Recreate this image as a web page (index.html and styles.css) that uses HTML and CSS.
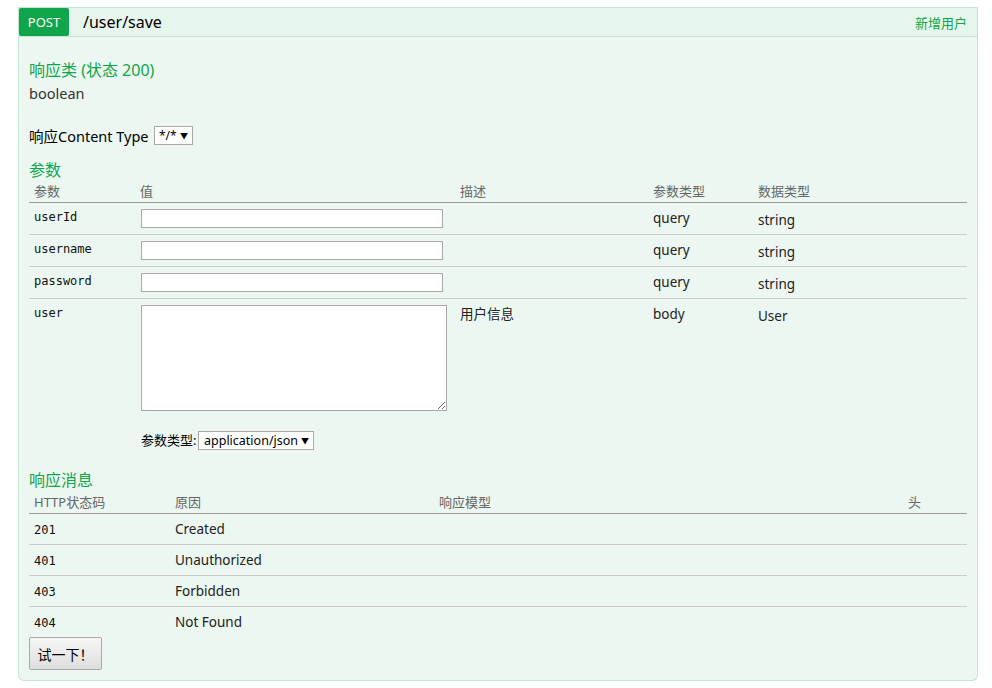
FILE: index.html
```html
<!DOCTYPE html>
<html lang="zh">
<head>
<meta charset="utf-8">
<title>/user/save</title>
<link rel="stylesheet" href="styles.css">
</head>
<body>
<div class="endpoint">
  <div class="heading">
    <span class="method">POST</span>
    <span class="path">/user/save</span>
    <span class="summary">新增用户</span>
  </div>
  <div class="content">
    <h4 class="title first">响应类 (状态 200)</h4>
    <div class="model">boolean</div>

    <div class="ctype">
      <span class="ctype-label">响应Content Type</span>
      <span class="select sm"><span>*/*</span><span class="arr">▼</span></span>
    </div>

    <h4 class="title params-title">参数</h4>
    <table class="params">
      <colgroup>
        <col class="c1"><col class="c2"><col class="c3"><col class="c4"><col>
      </colgroup>
      <thead>
        <tr><th>参数</th><th>值</th><th>描述</th><th>参数类型</th><th>数据类型</th></tr>
      </thead>
      <tbody>
        <tr><td class="code">userId</td><td><input class="txt" type="text"></td><td></td><td>query</td><td class="dt">string</td></tr>
        <tr><td class="code">username</td><td><input class="txt" type="text"></td><td></td><td>query</td><td class="dt">string</td></tr>
        <tr><td class="code">password</td><td><input class="txt" type="text"></td><td></td><td>query</td><td class="dt">string</td></tr>
        <tr class="last">
          <td class="code">user</td>
          <td>
            <textarea class="body-area"></textarea>
            <div class="ptype"><span class="ptype-label">参数类型:</span><span class="select lg"><span>application/json</span><span class="arr">▼</span></span></div>
          </td>
          <td>用户信息</td><td>body</td><td class="dt">User</td>
        </tr>
      </tbody>
    </table>

    <h4 class="title resp-title">响应消息</h4>
    <table class="resp">
      <colgroup>
        <col class="r1"><col class="r2"><col class="r3"><col>
      </colgroup>
      <thead>
        <tr><th>HTTP状态码</th><th>原因</th><th>响应模型</th><th>头</th></tr>
      </thead>
      <tbody>
        <tr><td class="code">201</td><td>Created</td><td></td><td></td></tr>
        <tr><td class="code">401</td><td>Unauthorized</td><td></td><td></td></tr>
        <tr><td class="code">403</td><td>Forbidden</td><td></td><td></td></tr>
        <tr class="last"><td class="code">404</td><td>Not Found</td><td></td><td></td></tr>
      </tbody>
    </table>
    <button class="try" type="button">试一下！</button>
  </div>
</div>
</body>
</html>
```

FILE: styles.css
```css
* { box-sizing: border-box; }
html, body { margin: 0; padding: 0; background: #fff; }
body {
  font-family: "Noto Sans", "Noto Sans CJK SC", sans-serif;
  color: #333;
  font-size: 14px;
}
.endpoint {
  margin: 7px 14px 0 18px;
  width: 960px;
}
.heading {
  display: flex;
  align-items: center;
  height: 30px;
  border: 1px solid #c3e8d1;
  background: #e7f6ec;
}
.method {
  width: 50px;
  height: 28px;
  background: #10a54a;
  color: #fff;
  font-size: 13px;
  display: flex;
  align-items: center;
  justify-content: center;
  border-radius: 2px;
}
.path {
  margin-left: 14px;
  font-size: 16px;
  color: #000;
  flex: 1;
}
.summary {
  font-size: 13px;
  color: #10a54a;
  margin-right: 10px;
}
.content {
  background: #ebf7f0;
  border: 1px solid #c3e8d1;
  border-top: none;
  border-bottom-left-radius: 6px;
  border-bottom-right-radius: 6px;
  padding: 10px;
}
.title {
  margin: 0;
  font-weight: normal;
  font-size: 16px;
  line-height: 22px;
  color: #10a54a;
}
.title.first { margin-top: 12px; }
.model { margin-top: 2px; line-height: 20px; font-size: 14.5px; }
.ctype {
  margin-top: 22px;
  display: flex;
  align-items: center;
  height: 20px;
  color: #000;
}
.ctype-label { font-size: 14.5px; width: 125px; }
.select {
  display: inline-flex;
  align-items: center;
  justify-content: space-between;
  height: 19px;
  background: #fff;
  border: 1px solid #a9a9a9;
  font-size: 12px;
  color: #000;
  padding: 0 4px 0 4px;
}
.select .arr { font-size: 8px; }
.select.sm { width: 39px; }
.select.lg { width: 116px; font-size: 12.5px; padding-left: 5px; }
.params-title { margin-top: 14px; }
table {
  width: 938px;
  border-collapse: collapse;
  table-layout: fixed;
}
col.c1 { width: 106px; }
col.c2 { width: 320px; }
col.c3 { width: 193px; }
col.c4 { width: 105px; }
col.r1 { width: 141px; }
col.r2 { width: 264px; }
col.r3 { width: 469px; }
th {
  font-weight: normal;
  text-align: left;
  color: #666;
  font-size: 13px;
  line-height: 21px;
  padding: 0 5px;
  border-bottom: 1px solid #999;
}
.resp th { line-height: 22px; }
td {
  padding: 6px 5px;
  vertical-align: top;
  border-bottom: 1px solid #ccc;
  font-size: 13.5px;
  line-height: 19px;
  color: #222;
}
tr.last td { border-bottom: none; }
td.code {
  font-family: "DejaVu Sans Mono", monospace;
  font-size: 12px;
  color: #111;
  line-height: 17px;
}
.params td.dt { padding-top: 8px; padding-bottom: 4px; }
.txt {
  display: block;
  width: 302px;
  height: 19px;
  margin: 0 0 0 1px;
  border: 1px solid #a9a9a9;
  background: #fff;
  padding: 0;
}
.body-area {
  display: block;
  width: 306px;
  height: 106px;
  margin: 0 0 0 1px;
  border: 1px solid #a9a9a9;
  background: #fff;
  resize: vertical;
  padding: 0;
}
.ptype {
  margin-top: 19px;
  margin-left: 1px;
  color: #000;
  display: flex;
  align-items: center;
  height: 20px;
}
.ptype-label { font-size: 13px; width: 57px; }
.resp-title { margin-top: 13px; }
.resp td { padding: 6px 5px 5px; }
.resp td.code { padding-top: 8px; padding-bottom: 5px; line-height: 17px; }
.try {
  display: block;
  width: 73px;
  height: 33px;
  margin: 0;
  border: 1px solid #a9a9a9;
  border-radius: 2px;
  background: linear-gradient(#f6f6f6, #dedede);
  font-family: "Noto Sans CJK SC", sans-serif;
  font-size: 14px;
  color: #000;
  padding: 0;
}
```
